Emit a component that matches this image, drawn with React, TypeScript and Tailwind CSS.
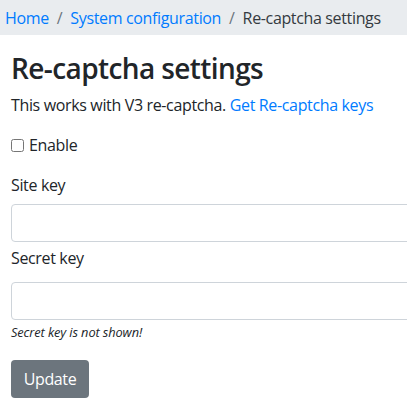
import React from "react";

export default function App() {
  return (
    <div className="w-[407px] h-[407px] overflow-hidden bg-white text-[#212529] font-['Open_Sans',sans-serif] tracking-[-0.35px]">
      <nav className="bg-[#e9ecef] h-[35px] px-[5px] flex items-center text-[16px] leading-[24px]">
        <a className="text-[#007bff]">Home</a>
        <span className="px-[8px] text-[#6c757d]">/</span>
        <a className="text-[#007bff]">System configuration</a>
        <span className="px-[8px] text-[#6c757d]">/</span>
        <span className="text-[#343a40]">Re-captcha settings</span>
      </nav>
      <div className="pl-[11px]">
        <h3 className="mt-[16px] text-[28px] leading-[34px] font-semibold tracking-[-0.6px]">Re-captcha settings</h3>
        <p className="mt-[8px] text-[16px] leading-[24px]">
          This works with V3 re-captcha. <a className="text-[#007bff]">Get Re-captcha keys</a>
        </p>
        <label className="mt-[16px] flex items-center gap-[5px] text-[16px] leading-[24px]">
          <input type="checkbox" className="w-[13px] h-[13px] m-0" />
          <span>Enable</span>
        </label>
        <div className="mt-[16px] text-[16px] leading-[24px]">Site key</div>
        <input className="mt-[7px] block w-[500px] h-[38px] border border-[#ced4da] rounded-[4px]" />
        <div className="mt-[4px] text-[16px] leading-[24px]">Secret key</div>
        <input className="mt-[12px] block w-[500px] h-[38px] border border-[#ced4da] rounded-[4px]" />
        <div className="mt-[3px] text-[12.8px] leading-[19px] italic tracking-[-0.1px]">Secret key is not shown!</div>
        <button className="mt-[18px] h-[38px] w-[78px] rounded-[4px] bg-[#6c757d] text-white text-[16px] leading-[24px]">
          Update
        </button>
      </div>
    </div>
  );
}
